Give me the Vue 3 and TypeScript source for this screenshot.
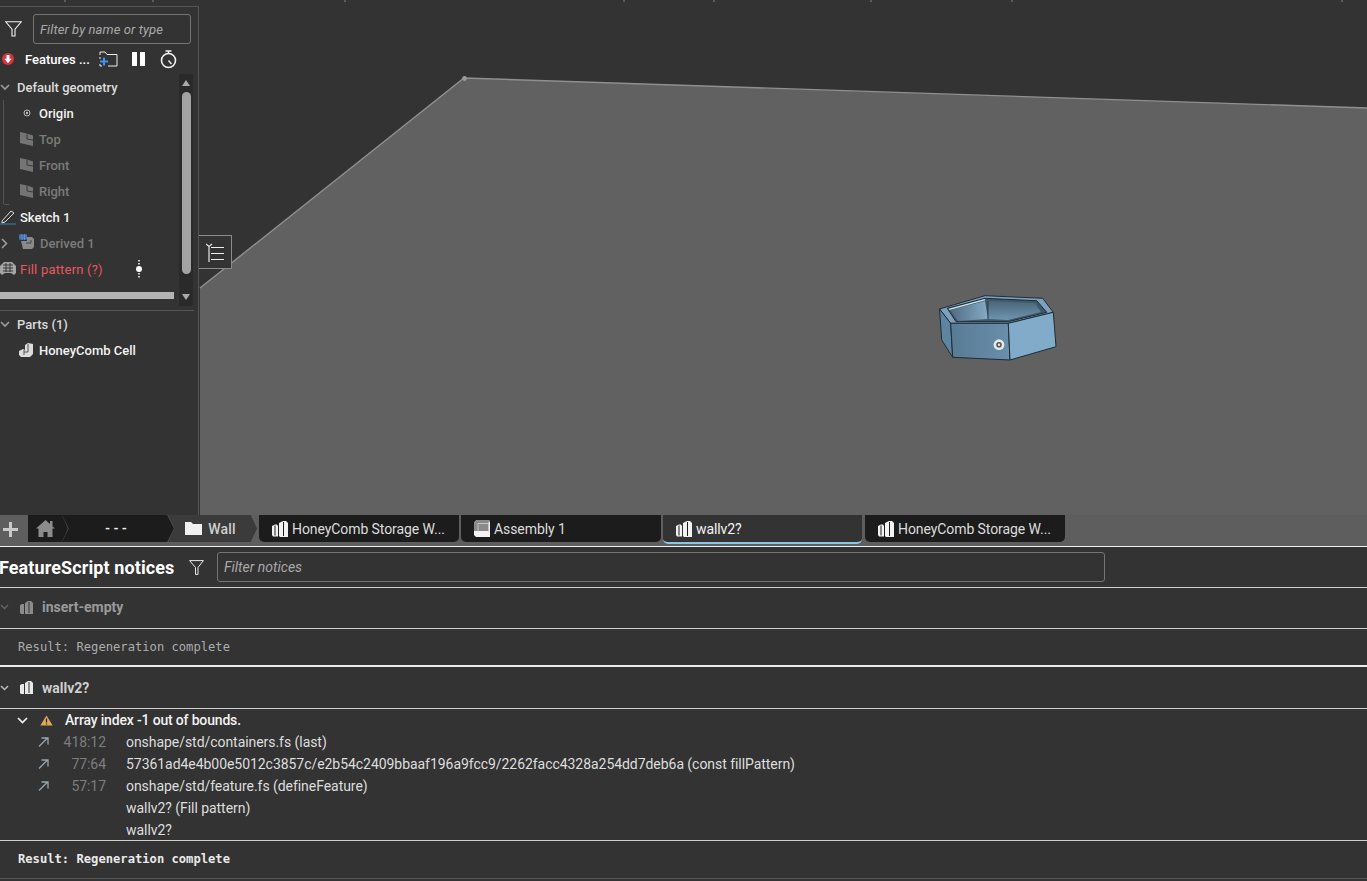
<script setup lang="ts">
interface TreeRow { label: string; icon: string; kind: string; }
const geometry: TreeRow[] = [
  { label: 'Origin', icon: 'origin', kind: 'bright' },
  { label: 'Top', icon: 'plane', kind: 'dim' },
  { label: 'Front', icon: 'plane', kind: 'dim' },
  { label: 'Right', icon: 'plane', kind: 'dim' },
];
const tabs = [
  { label: 'HoneyComb Storage W...', icon: 'studio', active: false },
  { label: 'Assembly 1', icon: 'assembly', active: false },
  { label: 'wallv2?', icon: 'studio', active: true },
  { label: 'HoneyComb Storage W...', icon: 'studio', active: false },
];
const trace = [
  { arrow: true, pos: '418:12', text: 'onshape/std/containers.fs (last)' },
  { arrow: true, pos: '77:64', text: '57361ad4e4b00e5012c3857c/e2b54c2409bbaaf196a9fcc9/2262facc4328a254dd7deb6a (const fillPattern)' },
  { arrow: true, pos: '57:17', text: 'onshape/std/feature.fs (defineFeature)' },
  { arrow: false, pos: '', text: 'wallv2? (Fill pattern)' },
  { arrow: false, pos: '', text: 'wallv2?' },
];
const ticks = [65, 153, 345, 624, 714, 871, 1012, 1342];
</script>

<template>
  <div class="app">
    <section class="viewport">
      <svg class="scene" width="1367" height="515" viewBox="0 0 1367 515">
        <defs>
          <linearGradient id="frontFace" x1="0" y1="0" x2="1" y2="0">
            <stop offset="0" stop-color="#587b95" />
            <stop offset="1" stop-color="#6a8fab" />
          </linearGradient>
          <linearGradient id="innerLeft" x1="0" y1="0" x2="1" y2="0">
            <stop offset="0" stop-color="#4e6c82" />
            <stop offset="1" stop-color="#86abc6" />
          </linearGradient>
          <linearGradient id="innerBack" x1="0" y1="0" x2="0" y2="1">
            <stop offset="0" stop-color="#4a6578" />
            <stop offset="1" stop-color="#6e95b0" />
          </linearGradient>
        </defs>
        <polygon points="200,288 464,78 1367,108 1367,515 200,515" fill="#616161" />
        <polyline points="200,288 464,78 1367,108" fill="none" stroke="#8f8f8f" stroke-width="1.4" />
        <circle cx="464.5" cy="78.5" r="2.4" fill="#9a9a9a" />
        <line v-for="t in ticks" :key="t" :x1="t" y1="0" :x2="t" y2="2" stroke="#858585" />
        <g stroke="#1f2c36" stroke-width="1" stroke-linejoin="round">
          <polygon points="939.5,309 985,295.7 1042.7,298.3 1053.3,312.3 1008.3,323.3 950.700,323.3" fill="#7ba1bc" />
          <polygon points="947.3,308.3 985,298.3 1036.700,300.7 1046.700,312.3 1008.3,321.700 956,321.700" fill="#3f5868" />
          <polygon points="950,310 985,301 988,319 958,321" fill="url(#innerLeft)" stroke="none" />
          <polygon points="988,301 1035,303 1041,312 1008,320 988,319" fill="url(#innerBack)" stroke="none" />
          <line x1="988" y1="301" x2="988" y2="319" stroke="#2c3d49" />
          <line x1="949" y1="309.300" x2="985" y2="299.700" stroke="#d4e6ef" stroke-width="1.300" />
          <polygon points="939.5,309 950.700,323.3 952.700,357.3 941.700,340" fill="#5d84a0" />
          <polygon points="950.700,323.3 1008.3,323.3 1010,360 952.700,357.3" fill="url(#frontFace)" />
          <polygon points="1008.3,323.3 1053.3,312.3 1056,346.700 1010,360" fill="#82abc9" />
        </g>
        <circle cx="999" cy="344.700" r="5.400" fill="#e8e8e8" />
        <circle cx="999" cy="344.700" r="2.800" fill="#555" />
        <circle cx="999" cy="344.700" r="1.200" fill="#e8e8e8" />
      </svg>

      <aside class="panel">
        <div class="filter-row">
          <svg class="funnel" width="17" height="16" viewBox="0 0 17 16"><path d="M.7.8h15.600L10 8.200v6.800H7V8.200z" fill="none" stroke="#f2f2f2" stroke-width="1.100" /></svg>
          <div class="filter-box"><span>Filter by name or type</span></div>
        </div>
        <div class="features-head">
          <svg class="alert" width="12" height="12" viewBox="0 0 12 12"><circle cx="6" cy="6" r="6" fill="#d6333f" /><path d="M4.500 2h3v3.800h2.200L6 10.200 2.300 5.800h2.200z" fill="#fff" /></svg>
          <strong class="features-title">Features ...</strong>
          <svg class="add-folder" width="19" height="16" viewBox="0 0 19 16"><path d="M1 4V1h5l2 2.500h10V15H9M1 6v2M1 13v2h2" fill="none" stroke="#eee" stroke-width="1" /><path d="M5 6.500v8M1 10.500h8" stroke="#3f92f0" stroke-width="2" /></svg>
          <span class="pause"><i></i><i></i></span>
          <svg class="timer" width="17" height="19" viewBox="0 0 17 19"><circle cx="8.500" cy="10.500" r="7" fill="none" stroke="#f2f2f2" stroke-width="1.600" /><path d="M5.500 1h6M8.500 1v2.500M8.500 10.500l3 3.500" fill="none" stroke="#f2f2f2" stroke-width="1.400" /></svg>
        </div>

        <div class="tree-wrap">
          <div class="tree">
            <div class="row group">
              <svg class="chev" width="10" height="7" viewBox="0 0 10 7"><path d="M1 1l4 4 4-4" fill="none" stroke="#9c9c9c" stroke-width="1.600" /></svg>
              <span class="label-group">Default geometry</span>
            </div>
            <div class="children">
              <div v-for="r in geometry" :key="r.label" class="row child" :class="r.kind">
                <svg v-if="r.icon === 'origin'" class="ic" width="14" height="14" viewBox="0 0 14 14"><circle cx="7" cy="7" r="3" fill="none" stroke="#bbb" /><circle cx="7" cy="7" r="1.200" fill="#bbb" /></svg>
                <svg v-else class="ic" width="14" height="14" viewBox="0 0 14 14"><path d="M0 0l7 1.500 6 2V14L0 11z" fill="#747474" /><path d="M7 1.500v5.500l6 1" stroke="#3a3a3a" fill="none" /></svg>
                <span>{{ r.label }}</span>
              </div>
            </div>
            <div class="row top-row bright">
              <svg class="ic-sk" width="16" height="16" viewBox="0 0 16 16"><path d="M2 12L11 2l3 2-9 9-3 1z" fill="none" stroke="#ddd" /><path d="M0 15h16" stroke="#3f7fc4" /></svg>
              <span>Sketch 1</span>
            </div>
            <div class="row top-row dim derived">
              <svg class="chev-r" width="7" height="11" viewBox="0 0 7 11"><path d="M1 1l4.500 4.500L1 10" fill="none" stroke="#9c9c9c" stroke-width="1.600" /></svg>
              <svg class="ic-de" width="16" height="15" viewBox="0 0 16 15"><path d="M2 7h6V3h5l2 2v8l-2 2H4z" fill="#8a8a8a" /><path d="M7 9h5V6" fill="none" stroke="#444" /><rect width="8" height="6" fill="#2f5d9a" /><path d="M0 2h8M0 4h8M3 0v6M5.500 0v6" stroke="#8db4e0" stroke-width=".5" /></svg>
              <span>Derived 1</span>
            </div>
            <div class="row top-row error">
              <svg class="ic-fp" width="16" height="15" viewBox="0 0 16 15"><path d="M0 5l4-4h8l4 4v7l-2 2-3-2H5l-3 2-2-2z" fill="#a5a5a5" /><path d="M3 4h10M3 7h10M3 10h10M6 2v9M10 2v9" stroke="#3a3a3a" /></svg>
              <span>Fill pattern (?)</span>
              <svg class="kebab" width="6" height="18" viewBox="0 0 6 18"><circle cx="3" cy="9" r="3" fill="#fff" /><path d="M3 0v5M3 13v5" stroke="#fff" stroke-width="1.500" stroke-dasharray="1.500 1.500" /></svg>
            </div>
            <div class="hbar"></div>
          </div>
          <div class="vscroll">
            <span class="up"></span>
            <span class="thumb"></span>
            <span class="down"></span>
          </div>
        </div>

        <div class="parts">
          <div class="row group">
            <svg class="chev" width="10" height="7" viewBox="0 0 10 7"><path d="M1 1l4 4 4-4" fill="none" stroke="#9c9c9c" stroke-width="1.600" /></svg>
            <span class="label-group">Parts (1)</span>
          </div>
          <div class="row child bright">
            <svg class="ic" width="15" height="14" viewBox="0 0 15 14"><path d="M0 8l4-2 2 1V2l3-2 5 1v10l-3 3H2L0 12z" fill="#dcdcdc" /><path d="M5 7v5M9 1v8H5" stroke="#555" fill="none" /></svg>
            <span>HoneyComb Cell</span>
          </div>
        </div>
      </aside>

      <button class="list-toggle" aria-label="Toggle list">
        <svg width="18" height="19" viewBox="0 0 18 19"><path d="M0 1l3 2.500L6 1M3 3.500V19" fill="none" stroke="#e6e6e6" stroke-width="1.200" /><path d="M5 4.500h13M5 10.500h13M5 16.500h13" stroke="#eee" stroke-width="1.100" /></svg>
      </button>
    </section>

    <nav class="tabbar">
      <span class="plus">
        <svg width="15" height="15" viewBox="0 0 15 15"><path d="M7.500 0v15M0 7.500h15" stroke="#c9c9c9" stroke-width="3" /></svg>
      </span>
      <div class="crumb home">
        <svg width="19" height="17" viewBox="0 0 19 17"><path d="M0 8.500L9.500 0 14 4V1h2.500v5.500L19 8.500h-2.500V17H11.500v-5h-4v5h-5V8.500z" fill="#8c8c8c" /></svg>
      </div>
      <div class="crumb dots">- - -</div>
      <div class="crumb wall">
        <svg width="17" height="13" viewBox="0 0 17 13"><path d="M0 0h6l2 2h9v11H0z" fill="#f0f0f0" /></svg>
        <span>Wall</span>
      </div>
      <div class="tabs">
        <div v-for="(t, i) in tabs" :key="i" class="tab" :class="{ active: t.active }">
          <svg v-if="t.icon === 'studio'" width="16" height="16" viewBox="0 0 16 16"><path d="M0 5l3-1.500h2l1 1.500v10.500H1L0 14z" fill="#f2f2f2" /><path d="M7 2l4-2h3l2 2v14H8l-1-1z" fill="#f2f2f2" /><path d="M11.500 1v14" stroke="#1c1c1c" /><path d="M3 4.500v10" stroke="#1c1c1c" /></svg>
          <svg v-else width="16" height="17" viewBox="0 0 16 17"><path d="M0 2.500L2.500 0H15l1 1.500V17H2l-2-2z" fill="#f2f2f2" /><path d="M0 2.500L2.500 0H15l1 1.500-2 1.500v8H0z" fill="#8a8a8a" /><path d="M4 3.500h10.500v8M4 3.500v8" stroke="#c4c4c4" fill="none" /></svg>
          <span>{{ t.label }}</span>
        </div>
      </div>
    </nav>

    <header class="notices-head">
      <h1>FeatureScript notices</h1>
      <svg width="15" height="15" viewBox="0 0 15 15"><path d="M.6.6h13.800L9 7.500v6.900H6.500V7.500z" fill="none" stroke="#eaeaea" stroke-width="1" /></svg>
      <div class="notice-filter"><span>Filter notices</span></div>
    </header>

    <section class="doc-head faded">
      <svg class="chev-sm" width="9" height="6" viewBox="0 0 9 6"><path d="M1 1l3.500 3.500L8 1" fill="none" stroke="#666" stroke-width="1.300" /></svg>
      <svg class="doc-ic" width="13" height="13" viewBox="0 0 13 13"><path d="M0 4l2-1h2v10H1l-1-1zM5 2l3-2h3l2 2v11H5z" fill="#8c8c8c" /><path d="M9 1v11" stroke="#333" /></svg>
      <strong>insert-empty</strong>
    </section>
    <div class="result plain">Result: Regeneration complete</div>

    <section class="doc-head current">
      <svg class="chev-sm" width="9" height="6" viewBox="0 0 9 6"><path d="M1 1l3.500 3.500L8 1" fill="none" stroke="#bbb" stroke-width="1.500" /></svg>
      <svg class="doc-ic" width="13" height="13" viewBox="0 0 13 13"><path d="M0 4l2-1h2v10H1l-1-1zM5 2l3-2h3l2 2v11H5z" fill="#e8e8e8" /><path d="M9 1v11" stroke="#333" /></svg>
      <strong>wallv2?</strong>
    </section>

    <section class="error-block">
      <div class="err-title">
        <svg class="chev-err" width="11" height="7" viewBox="0 0 11 7"><path d="M1 1l4.500 4.500L10 1" fill="none" stroke="#f2f2f2" stroke-width="1.700" /></svg>
        <svg class="warn" width="13" height="11" viewBox="0 0 13 11"><path d="M6.500.5L12.700 10.500H.3z" fill="#e0a95a" /><path d="M6.500 3.500v4M6.500 8.500v1" stroke="#222" stroke-width="1.200" /></svg>
        <span>Array index -1 out of bounds.</span>
      </div>
      <div v-for="(l, i) in trace" :key="i" class="trace-row">
        <span class="arrow-cell">
          <svg v-if="l.arrow" width="11" height="10" viewBox="0 0 11 10"><path d="M1 9.500L9 1.500M3.500 1h6.500v6.500" fill="none" stroke="#9aa5ad" stroke-width="1.300" /></svg>
        </span>
        <span class="pos">{{ l.pos }}</span>
        <span class="txt">{{ l.text }}</span>
      </div>
    </section>
    <div class="result strong">Result: Regeneration complete</div>
  </div>
</template>

<style>
html, body { margin: 0; background: #333; overflow: hidden; }
</style>

<style scoped>
.app {
  width: 1367px; height: 881px; background: #333; color: #e8e8e8; overflow: hidden;
  font-family: Roboto, "Noto Sans", sans-serif; font-size: 14px;
  display: flex; flex-direction: column;
}
.viewport { position: relative; height: 515px; flex: none; overflow: hidden; }
.scene { position: absolute; inset: 0; }
.panel {
  position: absolute; left: 0; top: 6px; width: 199px; height: 509px;
  box-sizing: border-box; border-top: 1px solid #555; border-right: 1px solid #555; background: #333;
}
.filter-row { display: flex; align-items: center; height: 30px; margin-top: 7px; padding-left: 5px; }
.funnel { margin-right: 11px; }
.filter-box {
  width: 158px; height: 30px; box-sizing: border-box; border: 1px solid #757575; border-radius: 3px;
  display: flex; align-items: center; padding-left: 6px; font-size: 13px; letter-spacing: .1px; font-style: italic; color: #a9a9a9;
}
.features-head { position: relative; display: flex; align-items: center; height: 26px; margin-top: 2px; padding-left: 2px; }
.alert { margin-right: 11px; }
.features-title { color: #fff; font-size: 13px; font-weight: 500; width: 74px; white-space: nowrap; }
.add-folder { margin-right: 14px; }
.pause { display: flex; gap: 3px; margin-right: 15px; }
.pause i { height: 14px; background: #fff; display: block; width: 5px; }
.tree-wrap { position: relative; height: 232px; width: 191px; margin-top: 2px; }
.tree { width: 180px; overflow: hidden; height: 232px; }
.row { display: flex; align-items: center; height: 26px; font-size: 13px; font-weight: 500; white-space: nowrap; }
.group { color: #dcdcdc; }
.group .chev { margin-right: 7px; }
.label-group { color: #dcdcdc; }
.children { border-left: 1px solid #555; margin-left: 3px; height: 104px; position: relative; }
.children::after { content: ""; position: absolute; left: 0; bottom: -1px; width: 5px; height: 1px; background: #555; }
.child { padding-left: 16px; }
.child .ic { margin-right: 5px; flex: none; }
.parts .child { padding-left: 19px; }
.parts .child .ic { margin-right: 5px; }
.bright { color: #f2f2f2; }
.dim { color: #7b7b7b; }
.error { color: #e8585e; font-weight: 400; letter-spacing: .2px; }
.top-row { position: relative; padding-left: 20px; }
.ic-sk { position: absolute; left: 0; top: 5px; }
.chev-r { position: absolute; left: 1px; top: 8px; }
.ic-fp { position: absolute; left: 0; top: 5px; }
.ic-de { position: absolute; left: 19px; top: 4px; }
.derived { padding-left: 40px; }
.kebab { position: absolute; left: 136px; top: 4px; }
.hbar { width: 174px; height: 7px; margin-top: 10px; background: #b3b3b3; }
.vscroll { position: absolute; left: 179px; top: 0; width: 14px; height: 232px; background: #2a2a2a; }
.thumb { position: absolute; left: 3px; top: 18px; width: 9px; height: 182px; background: #a3a3a3; border-radius: 5px; }
.up, .down { position: absolute; left: 3px; width: 0; height: 0; border-left: 4.500px solid transparent; border-right: 4.500px solid transparent; }
.up { top: 6px; border-bottom: 6px solid #aaa; }
.down { bottom: 6px; border-top: 6px solid #aaa; }
.parts { border-top: 1px solid #555; width: 194px; margin-top: 4px; }
.list-toggle {
  position: absolute; left: 199px; top: 235px; width: 33px; height: 34px; box-sizing: border-box;
  background: #333; border: 1px solid #8b8b8b; border-left: 0; padding: 0;
  display: flex; align-items: center; justify-content: center;
}
.tabbar {
  height: 32px; flex: none; box-sizing: border-box; background: #5e5e5e; display: flex; align-items: stretch;
  border-bottom: 1px solid #f0f0f0;
  padding-bottom: 4px;
}
.plus { width: 28px; box-sizing: border-box; padding: 7px 0 0 3px; display: block; }
.plus svg { display: block; }
.crumb { display: flex; align-items: center; justify-content: center; flex: none; height: 27px; }
.home { width: 40px; background: #1c1c1c; clip-path: polygon(0 0, 85% 0, 100% 50%, 85% 100%, 0 100%); padding-right: 6px; box-sizing: border-box; }
.dots { width: 112px; margin-left: -6px; box-sizing: border-box; padding-right: 4px; background: #1c1c1c; color: #eee; font-weight: 700; font-size: 13px; clip-path: polygon(0 0, 94% 0, 100% 50%, 94% 100%, 0 100%, 6% 50%); }
.wall { width: 89px; margin-left: -6px; background: #3b3b3b; clip-path: polygon(0 0, 93% 0, 100% 50%, 93% 100%, 0 100%, 7% 50%); gap: 6px; font-size: 14px; font-weight: 500; letter-spacing: .2px; color: #cfcfcf; padding-right: 4px; box-sizing: border-box; }
.tabs { display: flex; gap: 2px; margin-left: 2px; }
.tab { width: 200px; height: 27px; box-sizing: border-box; background: #1c1c1c; border-radius: 0 0 5px 5px; display: flex; align-items: center; gap: 4px; padding-left: 13px; font-size: 14px; letter-spacing: -.08px; color: #dcdcdc; }
.tab.active { background: #333; color: #f4f4f4; border-bottom: 2px solid #8cc6e6; height: 29px; margin-bottom: -2px; width: 199px; margin-right: 1px; }
.notices-head { display: flex; align-items: center; height: 41px; flex: none; box-sizing: border-box; border-bottom: 1px solid #d0d0d0; }
.notices-head h1 { margin: 0 15px 0 -1px; font-size: 18px; font-weight: 700; letter-spacing: .1px; color: #fff; white-space: nowrap; width: 175px; }
.notice-filter { margin-left: 13px; width: 888px; height: 30px; box-sizing: border-box; border: 1px solid #757575; border-radius: 3px; display: flex; align-items: center; padding-left: 6px; font-size: 14px; font-style: italic; color: #a9a9a9; }
.doc-head { display: flex; align-items: center; flex: none; box-sizing: border-box; border-bottom: 1px solid #d0d0d0; height: 41px; font-size: 14px; padding-bottom: 2px; }
.doc-head strong { font-weight: 700; }
.chev-sm { margin-right: 11px; }
.doc-ic { margin-right: 9px; }
.faded strong { color: #9a9a9a; }
.current { height: 42px; padding-bottom: 0; }
.current strong { color: #cfcfcf; }
.result { flex: none; box-sizing: border-box; padding-left: 18px; font-family: "DejaVu Sans Mono", "Liberation Mono", monospace; font-size: 12.150px; display: flex; align-items: center; }
.plain { height: 38px; color: #adadad; border-bottom: 2px solid #ededed; }
.strong { height: 38px; color: #eaeaea; font-weight: 700; border-bottom: 1px solid #555; padding-bottom: 2px; }
.error-block { height: 132px; flex: none; box-sizing: border-box; border-bottom: 1px solid #d0d0d0; font-size: 14px; }
.err-title { display: flex; align-items: center; height: 22px; font-weight: 500; letter-spacing: -.17px; color: #f2f2f2; }
.chev-err { margin-left: 17px; margin-right: 12px; }
.warn { margin-right: 12px; }
.trace-row { display: flex; align-items: center; height: 22px; color: #dedede; white-space: nowrap; letter-spacing: -.05px; }
.arrow-cell { padding-left: 38px; display: flex; width: 11px; }
.pos { width: 57px; text-align: right; color: #7d7d7d; margin-right: 20px; }
</style>
